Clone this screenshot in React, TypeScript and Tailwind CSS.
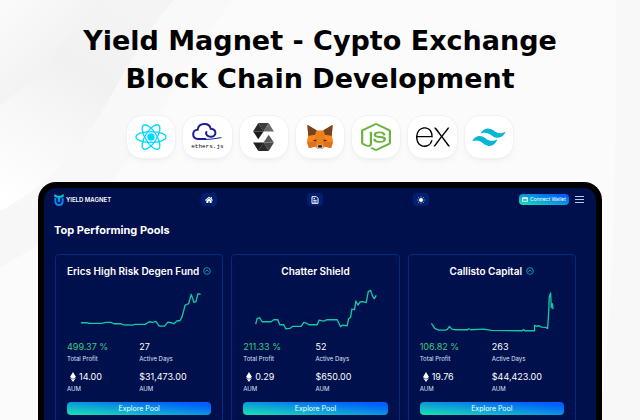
import { FaEthereum, FaHome, FaNodeJs } from "react-icons/fa";
import { SiExpress } from "react-icons/si";
import { BsSunFill } from "react-icons/bs";
import type { ReactNode } from "react";

type Pool = {
  name: string;
  verified: boolean;
  profit: string;
  days: string;
  eth: string;
  usd: string;
  line: string;
};

const pools: Pool[] = [
  {
    name: "Erics High Risk Degen Fund",
    verified: true,
    profit: "499.37 %",
    days: "27",
    eth: "14.00",
    usd: "$31,473.00",
    line: "M42 107 H60 L66 109 H104 L116 106 H132 L140 110 H160 L168 113 L195 114 L204 112 H234 L246 104 L256 106 L266 103 L276 117 H292 L302 105 L312 107 L320 110 L330 101 H338 L344 90 L354 54 L364 50 L372 22 L380 46 L386 44 L392 20 L400 22",
  },
  {
    name: "Chatter Shield",
    verified: false,
    profit: "211.33 %",
    days: "52",
    eth: "0.29",
    usd: "$650.00",
    line: "M38 111 L42 95 L50 92 L57 104 H84 L92 98 H104 L110 113 H122 L128 125 L140 124 L148 118 H174 L182 106 L190 108 L197 113 H222 L228 99 L242 102 L252 98 H282 L292 119 L298 114 L312 116 L316 95 L322 91 L326 66 L334 68 L338 42 L344 54 L350 45 L358 44 L369 47 L375 14 L382 10 L388 28 L393 35 L399 25",
  },
  {
    name: "Callisto Capital",
    verified: true,
    profit: "106.82 %",
    days: "263",
    eth: "19.76",
    usd: "$44,423.00",
    line: "M34 109 L38 114 L44 124 L56 129 H76 L82 127 L88 118 L95 126 L106 128 H142 L146 125 L152 128 L190 126 L214 130 L306 131 L310 127 L314 131 H343 V115 L350 118 L356 116 L364 120 L376 121 L382 124 L385 80 L387 30 L391 18 L393 62 L396 50 L398 66",
  },
];

function ReactLogo() {
  return (
    <svg viewBox="0 0 96 80" className="h-7 w-8" fill="none" stroke="#00d8ff" strokeWidth="4">
      <ellipse cx="48" cy="40" rx="45" ry="16" />
      <ellipse cx="48" cy="40" rx="42" ry="17" transform="rotate(58 48 40)" />
      <ellipse cx="48" cy="40" rx="42" ry="17" transform="rotate(-58 48 40)" />
      <circle cx="48" cy="40" r="9" fill="#00d8ff" />
    </svg>
  );
}

function EthersLogo() {
  return (
    <span className="flex flex-col items-center">
      <svg viewBox="0 0 90 54" className="h-[18px] w-[30px]" fill="none" stroke="#1c1f93" strokeWidth="6" strokeLinecap="round">
        <path d="M40 48 H18 C-2 46 0 20 17 20 C20 -2 52 -2 56 17 C76 18 73 42 58 41 C48 42 40 36 43 27" />
        <path d="M24 49 C50 51 65 47 87 44" strokeWidth="3" />
      </svg>
      <span className="mt-0.5 font-['Liberation_Mono',monospace] text-[6px] leading-2 text-black">ethers.js</span>
    </span>
  );
}

function SolidityLogo() {
  return (
    <svg viewBox="0 0 64 86" className="h-7 w-[21px]">
      <path d="M16 0 H48 L32 27Z" fill="#3c3c3c" />
      <path d="M48 0 L64 26 H32Z" fill="#6b6b6b" />
      <path d="M16 0 L32 26 H0Z" fill="#292929" />
      <path d="M0 26 H32 L16 50Z" fill="#1b1b1b" />
      <g transform="rotate(180 32 43)">
        <path d="M16 0 H48 L32 27Z" fill="#2b2b2b" />
        <path d="M48 0 L64 26 H32Z" fill="#202020" />
        <path d="M16 0 L32 26 H0Z" fill="#474747" />
        <path d="M0 26 H32 L16 50Z" fill="#5b5b5b" />
      </g>
    </svg>
  );
}

function FoxLogo() {
  return (
    <svg viewBox="0 0 84 80" className="h-[26px] w-7">
      <path d="M3 3 L30 20 H54 L81 3 L78 38 L82 56 L76 74 L58 70 L49 77 H35 L26 70 L8 74 L2 56 L6 38Z" fill="#ee7f1e" />
      <path d="M3 2 L32 19 L26 34 L6 37Z M81 2 L52 19 L58 34 L78 37Z" fill="#76431f" />
      <path d="M6 37 L26 34 L32 54 L2 56Z M78 37 L58 34 L52 54 L82 56Z" fill="#f6851b" />
      <path d="M2 56 L32 53 L26 70 L8 74Z M82 56 L52 53 L58 70 L76 74Z" fill="#e0701c" />
      <path d="M19 50 L31 48 L30 54Z M65 50 L53 48 L54 54Z" fill="#2b3040" />
      <path d="M30 71 L36 64 H48 L54 71 L49 77 H35Z" fill="#d5bfb2" />
      <path d="M35 68 L38 65 H46 L49 68 L47 72 H37Z" fill="#1b1b1b" />
    </svg>
  );
}

function TailwindLogo() {
  return (
    <svg viewBox="0 0 102 56" className="h-[19px] w-[34px]" fill="#06b6d4">
      <path d="M26 16 C34 -2 52 -3 65 7 C76 16 88 18 101 11 C94 28 78 34 62 24 C50 15 40 10 26 16Z" />
      <path d="M1 39 C10 21 27 20 40 30 C52 39 63 40 76 34 C69 52 53 59 37 48 C26 38 15 34 1 39Z" />
    </svg>
  );
}

const stack: { name: string; logo: ReactNode }[] = [
  { name: "React", logo: <ReactLogo /> },
  { name: "ethers", logo: <EthersLogo /> },
  { name: "Solidity", logo: <SolidityLogo /> },
  { name: "MetaMask", logo: <FoxLogo /> },
  { name: "Node", logo: <FaNodeJs preserveAspectRatio="none" className="h-7 w-[30px] text-[#6cb33e]" /> },
  { name: "Express", logo: <SiExpress className="size-[34px] text-black" /> },
  { name: "Tailwind", logo: <TailwindLogo /> },
];

function Backdrop() {
  return (
    <svg className="absolute inset-0 -z-10 h-full w-full" viewBox="0 0 640 420" preserveAspectRatio="none" aria-hidden="true">
      <defs>
        <linearGradient id="outer" gradientUnits="userSpaceOnUse" x1="0" y1="260" x2="200" y2="0">
          <stop offset="0" stopColor="#f7f7f7" />
          <stop offset="1" stopColor="#f9f9f9" />
        </linearGradient>
        <linearGradient id="middle" gradientUnits="userSpaceOnUse" x1="0" y1="200" x2="120" y2="0">
          <stop offset="0" stopColor="#ffffff" />
          <stop offset="0.35" stopColor="#f8f8f8" />
          <stop offset="0.65" stopColor="#f1f1f1" />
          <stop offset="1" stopColor="#f4f4f4" />
        </linearGradient>
        <linearGradient id="inner" gradientUnits="userSpaceOnUse" x1="0" y1="0" x2="60" y2="60">
          <stop offset="0" stopColor="#fbfbfb" />
          <stop offset="1" stopColor="#f2f2f2" />
        </linearGradient>
      </defs>
      <rect width="640" height="420" fill="#fbfbfb" />
      <path d="M0 0 H234 C170 70 150 190 0 267Z" fill="url(#outer)" />
      <path d="M0 0 H174 C110 70 105 155 0 211Z" fill="url(#middle)" />
      <path d="M0 0 H97 C60 50 40 75 0 105Z" fill="url(#inner)" />
      <path d="M616 0 H640 V420 H600 C616 280 616 140 616 0Z" fill="#f8f8f8" />
    </svg>
  );
}

function Brand() {
  return (
    <a href="#home" className="flex items-center gap-0.5 text-[6px] leading-3 font-semibold whitespace-nowrap text-white">
      <svg viewBox="0 0 30 36" className="h-3 w-2.5" fill="none">
        <defs>
          <linearGradient id="brand" x1="0" y1="0" x2="0" y2="1">
            <stop offset="0" stopColor="#13e0b5" />
            <stop offset="1" stopColor="#0a6cff" />
          </linearGradient>
        </defs>
        <path d="M1 0 L10 5 H20 L29 0 V9 L19 12 V25 H11 V12 L1 9Z" fill="url(#brand)" />
        <path d="M4 12 V21 C4 37 26 37 26 21 V12" stroke="#0c86ee" strokeWidth="6" />
      </svg>
      YIELD MAGNET
    </a>
  );
}

function NavButton({ label, children }: { label: string; children: ReactNode }) {
  return (
    <button aria-label={label} className="flex h-[13px] w-4 items-center justify-center rounded bg-[#001f6e] text-white">
      {children}
    </button>
  );
}

function Stat({ label, children }: { label: string; children: ReactNode }) {
  return (
    <div className="flex flex-col-reverse">
      <dt className="text-[6px] leading-3 text-[#dfe4f5]">{label}</dt>
      <dd className="flex items-center text-[9px] leading-3 text-white">{children}</dd>
    </div>
  );
}

function PoolCard({ pool }: { pool: Pool }) {
  return (
    <article className="rounded border border-[#032a80] px-[11px] pt-2 pb-4">
      <h3 className="flex items-center justify-center gap-1 text-[10px] leading-4 font-semibold whitespace-nowrap text-white">
        {pool.name}
        {pool.verified && (
          <svg viewBox="0 0 24 24" className="size-2" fill="none" stroke="#0a94a8" strokeWidth="3">
            <circle cx="12" cy="12" r="10" />
            <path d="M7 14 L12 9 L17 14" />
          </svg>
        )}
      </h3>
      <svg viewBox="0 0 432 138" className="mt-2 mb-2 block w-full" fill="none" stroke="#14c8a4" strokeWidth="4" strokeLinejoin="round">
        <path d={pool.line} />
      </svg>
      <dl className="grid grid-cols-2 gap-y-1.5">
        <Stat label="Total Profit">
          <span className="text-[#3ccb7f]">{pool.profit}</span>
        </Stat>
        <Stat label="Active Days">{pool.days}</Stat>
        <Stat label="AUM">
          <FaEthereum className="mx-px size-2.5" />
          {pool.eth}
        </Stat>
        <Stat label="AUM">{pool.usd}</Stat>
      </dl>
      <button className="mt-[7px] block h-[13px] w-full rounded bg-linear-to-tr/srgb from-[#1ae5b0] to-[#0060ff] to-85% text-[7px] leading-[13px] text-white">
        Explore Pool
      </button>
    </article>
  );
}

export default function App() {
  return (
    <main className="relative isolate flex h-screen flex-col overflow-hidden font-['Inter','Liberation_Sans',sans-serif]">
      <Backdrop />
      <h1 className="pt-[22px] text-center font-['DejaVu_Sans',sans-serif] text-[27px] leading-[38px] font-bold text-black">
        Yield Magnet - Cypto Exchange
        <br />
        Block Chain Development
      </h1>
      <ul className="mx-auto mt-[17px] grid w-[388px] grid-cols-7 gap-1.5">
        {stack.map((item) => (
          <li key={item.name} className="flex h-11 items-center justify-center rounded-2xl border border-[#f1f1f3] bg-white shadow-md shadow-black/3">
            {item.logo}
          </li>
        ))}
      </ul>
      <section className="mx-[38px] mt-[23px] shrink-0 rounded-t-[18px] border-x-6 border-t-6 border-black bg-[#00104d] pb-8 pl-2.5">
        <header className="flex items-center justify-between pt-[5px] pr-3">
          <Brand />
          <NavButton label="Home">
            <FaHome className="size-2" />
          </NavButton>
          <NavButton label="Documents">
            <svg viewBox="0 0 24 24" className="size-2" fill="none" stroke="currentColor" strokeWidth="3">
              <path d="M3 2 H16 L21 7 V22 H3Z M7 8 H12 M7 13 H17 M7 18 H17" />
            </svg>
          </NavButton>
          <NavButton label="Theme">
            <BsSunFill className="size-2" />
          </NavButton>
          <div className="flex items-center gap-1.5">
            <button className="flex h-[11px] w-[50px] items-center justify-center gap-0.5 rounded bg-linear-to-tr/srgb from-[#1ae5b0] to-[#0060ff] to-85% text-[5px] leading-[11px] whitespace-nowrap text-white">
              <svg viewBox="0 0 20 16" className="h-[5px] w-1.5" fill="none" stroke="currentColor" strokeWidth="3">
                <path d="M2 2 H18 V14 H2Z M2 5 H18" />
              </svg>
              Connect Wallet
            </button>
            <button aria-label="Menu" className="flex w-[9px] flex-col gap-0.5">
              <span className="h-px w-full bg-[#c3c9de]" />
              <span className="h-px w-full bg-[#c3c9de]" />
              <span className="h-px w-full bg-[#c3c9de]" />
            </button>
          </div>
        </header>
        <h2 className="mt-4 text-[11px] leading-4 font-bold text-white">Top Performing Pools</h2>
        <div className="mt-4 mr-5 ml-px grid grid-cols-3 gap-2">
          {pools.map((pool) => (
            <PoolCard key={pool.name} pool={pool} />
          ))}
        </div>
      </section>
    </main>
  );
}
